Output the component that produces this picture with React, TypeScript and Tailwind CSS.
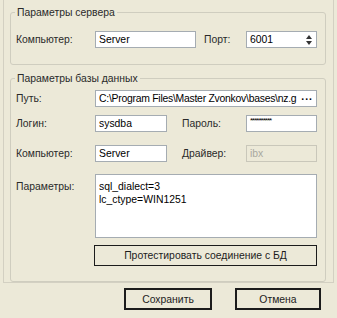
import React from 'react';

// ─── XP-ish dialog pieces ────────────────────────────────────
function Field({ w, children, disabled }: { w: string; children?: React.ReactNode; disabled?: boolean }) {
  const look = disabled
    ? 'bg-[#ece9d8] text-[#a9a89f] border-[#c9c7ba]'
    : 'bg-white text-black border-[#a5acb2]';
  return (
    <div className={`h-[17px] border px-[3px] flex items-center ${look} ${w}`}>
      {children}
    </div>
  );
}

function Label({ w, children, className = '' }: { w: string; children: React.ReactNode; className?: string }) {
  return <span className={`${w} shrink-0 text-[#2a2a2a] ${className}`}>{children}</span>;
}

function GroupBox({ title, h, children, className = '' }: { title: string; h: string; children: React.ReactNode; className?: string }) {
  return (
    <fieldset className={`w-[316px] ${h} border border-[#cfcdbf] rounded-[3px] ${className}`}>
      <legend className="ml-[4px] px-[2px] leading-[13px] text-[#2a2a2a]">{title}</legend>
      {children}
    </fieldset>
  );
}

function Spinner() {
  return (
    <div className="ml-auto flex flex-col items-center justify-center gap-[2px] pr-[1px]">
      <svg width="6" height="4" viewBox="0 0 6 4"><path d="M0 4 L3 0 L6 4 Z" fill="#333" /></svg>
      <svg width="6" height="4" viewBox="0 0 6 4"><path d="M0 0 L3 4 L6 0 Z" fill="#333" /></svg>
    </div>
  );
}

export default function App() {
  return (
    <div className="w-[337px] h-[318px] bg-[#ece9d8] text-[10.4px] leading-[13px] font-['Liberation_Sans',Arial,sans-serif] overflow-hidden">
      {/* outer panel */}
      <div className="ml-[3px] w-[331px] h-[283px] border-x border-b border-[#d3d0c2] pt-[6px] pl-[6px]">
        <GroupBox title="Параметры сервера" h="h-[59px]">
          <div className="flex items-center pl-[5px] mt-[12px]">
            <Label w="w-[79px]">Компьютер:</Label>
            <Field w="w-[101px]">Server</Field>
            <Label w="w-[42px]" className="ml-[8px]">Порт:</Label>
            <Field w="w-[71px]">
              <span>6001</span>
              <Spinner />
            </Field>
          </div>
        </GroupBox>

        <GroupBox title="Параметры базы данных" h="h-[210px]" className="mt-[7px]">
          <div className="flex flex-col pl-[5px] pt-[5px]">
            <div className="flex items-center">
              <Label w="w-[79px]">Путь:</Label>
              <Field w="w-[222px]">
                <span className="whitespace-nowrap tracking-[-0.25px]">C:\Program Files\Master Zvonkov\bases\nz.g</span>
                <span className="ml-auto shrink-0 font-bold tracking-[1px] leading-[8px] pb-[3px]">...</span>
              </Field>
            </div>

            <div className="flex items-center mt-[8px]">
              <Label w="w-[79px]">Логин:</Label>
              <Field w="w-[72px]">sysdba</Field>
              <Label w="w-[64px]" className="ml-[15px]">Пароль:</Label>
              <Field w="w-[71px]">
                <span className="text-[8px] leading-[8px] self-start pt-[1px] tracking-[-1px]">**********</span>
              </Field>
            </div>

            <div className="flex items-center mt-[13px]">
              <Label w="w-[79px]">Компьютер:</Label>
              <Field w="w-[72px]">Server</Field>
              <Label w="w-[64px]" className="ml-[15px]">Драйвер:</Label>
              <Field w="w-[71px]" disabled>ibx</Field>
            </div>

            <div className="flex mt-[12px]">
              <Label w="w-[79px]" className="pt-[6px]">Параметры:</Label>
              <div className="w-[222px] h-[64px] border border-[#a5acb2] bg-white px-[3px] pt-[5px] text-black">
                <div>sql_dialect=3</div>
                <div>lc_ctype=WIN1251</div>
              </div>
            </div>

            <div className="flex mt-[7px]">
              <button className="ml-[78px] w-[223px] h-[21px] border border-[#1c1c1c] bg-[#ece9d8] text-[#1c1c1c] flex items-center justify-center">
                Протестировать соединение с БД
              </button>
            </div>
          </div>
        </GroupBox>
      </div>

      {/* dialog buttons */}
      <div className="flex mt-[5px] pl-[124px]">
        <button className="w-[88px] h-[22px] border-2 border-[#1c1c1c] bg-[#ece9d8] text-[#1c1c1c] flex items-center justify-center">
          Сохранить
        </button>
        <button className="ml-[23px] w-[86px] h-[22px] border-2 border-[#1c1c1c] bg-[#ece9d8] text-[#1c1c1c] flex items-center justify-center">
          Отмена
        </button>
      </div>
    </div>
  );
}
